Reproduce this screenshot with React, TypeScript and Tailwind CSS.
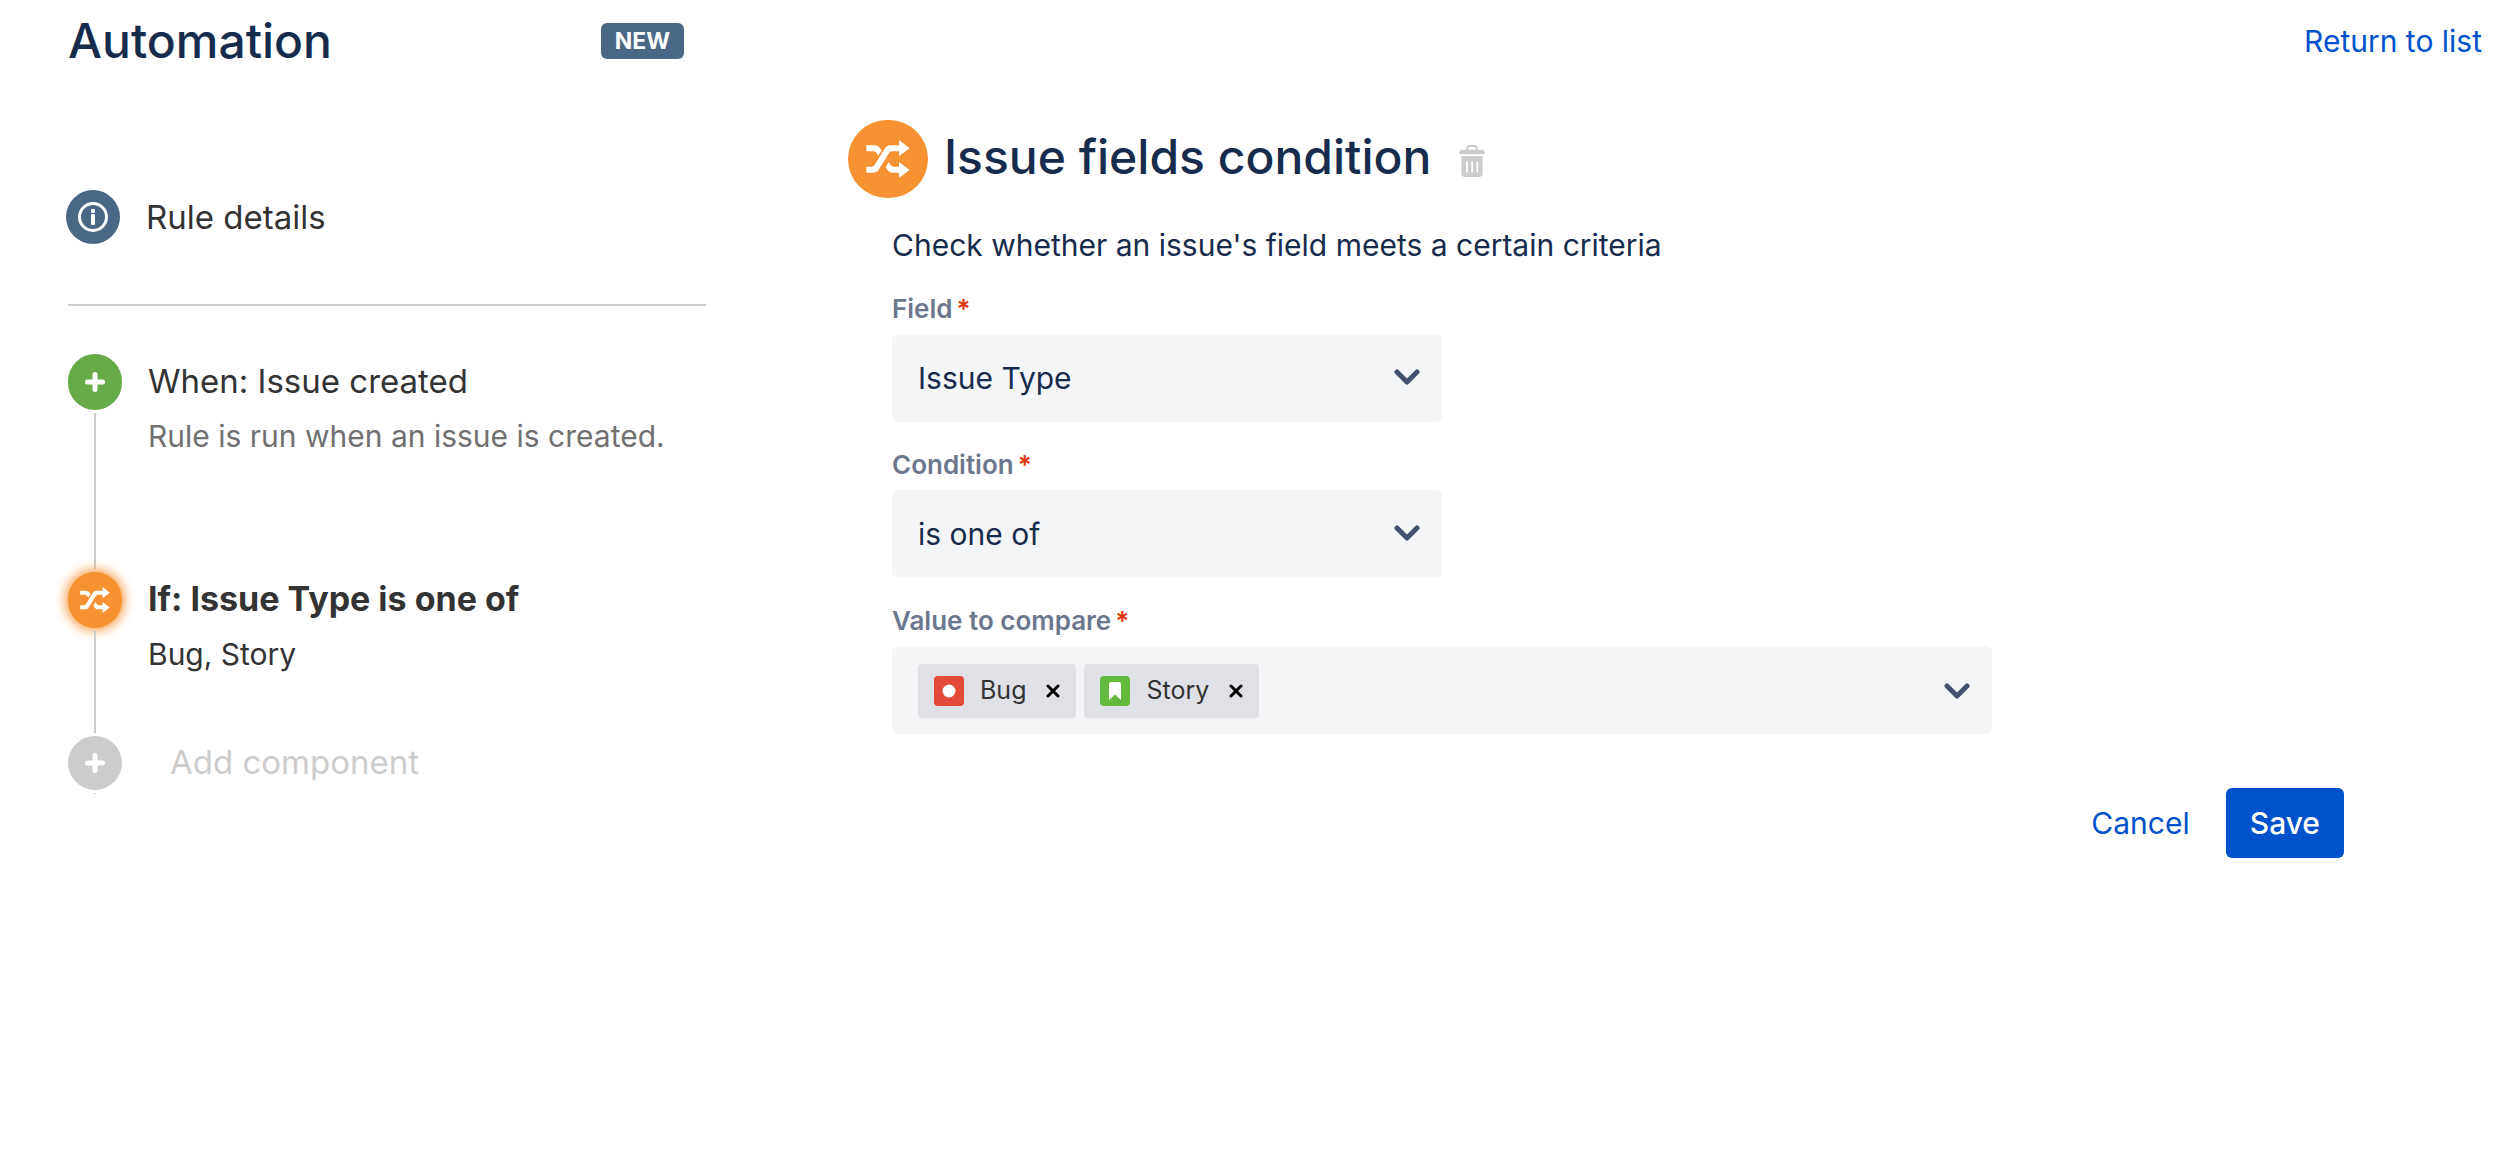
import React, { FC, ReactNode } from "react";

const ShuffleIcon: FC<{ className?: string }> = ({ className }) => (
  <svg viewBox="0 0 130 114" fill="currentColor" className={className} aria-hidden="true">
    <path d="M0 80H17C22 80 24 76 28 70L54 28C59 20 64 16 72 16H98V0L130 25L98 49V34H78C72 34 70 37 66 43L40 85C35 94 30 98 22 98H0Z" />
    <path d="M0 16H24C32 16 38 19 46 31L36 47C29 36 26 34 20 34H0Z" />
    <path d="M67 66L58 82C64 93 70 98 78 98H98V114L130 90L98 66V80H82C76 80 71 74 67 66Z" />
  </svg>
);

const PlusIcon: FC = () => (
  <svg viewBox="0 0 20 20" className="h-5 w-5" aria-hidden="true">
    <path d="M10 2.5V17.5M2.5 10H17.5" stroke="white" strokeWidth="5" strokeLinecap="round" />
  </svg>
);

const InfoIcon: FC = () => (
  <svg viewBox="0 0 30 30" className="h-[30px] w-[30px]" aria-hidden="true">
    <circle cx="15" cy="15" r="13.5" fill="none" stroke="white" strokeWidth="3" />
    <rect x="13" y="7" width="4" height="4" rx="1" fill="white" />
    <rect x="13" y="12" width="4" height="11" rx="1" fill="white" />
  </svg>
);

const TrashIcon: FC = () => (
  <svg viewBox="0 0 74 93" className="h-8 w-[26px]" fill="#ccc" aria-hidden="true">
    <path d="M23 16V10Q23 3 30 3H44Q51 3 51 10V16" fill="none" stroke="#ccc" strokeWidth="6" />
    <path d="M0 27V22Q0 14 8 14H66Q74 14 74 22V27Z" />
    <path
      fillRule="evenodd"
      d="M6 32H68V82Q68 93 57 93H17Q6 93 6 82ZM20 48V80H25V48ZM35 48V80H40V48ZM50 48V80H55V48Z"
    />
  </svg>
);

const ChevronIcon: FC<{ className?: string }> = ({ className }) => (
  <svg viewBox="0 0 26 18" className={"h-[18px] w-[26px] " + (className || "")} aria-hidden="true">
    <path
      d="M3 4L13 14L23 4"
      fill="none"
      stroke="#42526e"
      strokeWidth="5"
      strokeLinecap="round"
      strokeLinejoin="round"
    />
  </svg>
);

const BugIcon: FC = () => (
  <svg viewBox="0 0 30 30" className="h-[30px] w-[30px]" aria-hidden="true">
    <rect width="30" height="30" rx="4" fill="#e5493a" />
    <circle cx="15" cy="15" r="6.5" fill="white" />
  </svg>
);

const StoryIcon: FC = () => (
  <svg viewBox="0 0 30 30" className="h-[30px] w-[30px]" aria-hidden="true">
    <rect width="30" height="30" rx="4" fill="#63ba3c" />
    <path d="M9 8Q9 6 11 6H19Q21 6 21 8V24L15 18.5L9 24Z" fill="white" />
  </svg>
);

interface StepProps {
  icon: ReactNode;
  color: string;
  title: string;
  titleClass: string;
  height?: string;
  last?: boolean;
  children?: ReactNode;
}

const Step: FC<StepProps> = ({ icon, color, title, titleClass, height, last, children }) => (
  <li className={"flex " + (height || "")}>
    <div className="flex w-[54px] shrink-0 flex-col items-center">
      <div className={"flex w-[54px] items-center justify-center rounded-full " + color}>{icon}</div>
      <div className={"my-[3px] w-0.5 bg-[#ccc] " + (last ? "h-px" : "flex-1")} />
    </div>
    <div className="pl-[26px]">
      <h3 className={titleClass}>{title}</h3>
      {children}
    </div>
  </li>
);

const FieldLabel: FC<{ htmlFor: string; children: ReactNode }> = ({ htmlFor, children }) => (
  <label
    htmlFor={htmlFor}
    className="mt-[27px] mb-[9px] flex gap-1 text-[26px] leading-8 font-semibold text-[#6b778c]"
  >
    {children}
    <span className="text-[#de350b]">*</span>
  </label>
);

const SelectField: FC<{ id: string; label: string; value: string }> = ({ id, label, value }) => (
  <div>
    <FieldLabel htmlFor={id}>{label}</FieldLabel>
    <div className="relative w-1/2">
      <select
        id={id}
        defaultValue={value}
        className="h-[88px] w-full appearance-none rounded-md bg-[#f4f5f7] px-[26px] text-[30px] text-[#172b4d]"
      >
        <option>{value}</option>
      </select>
      <ChevronIcon className="pointer-events-none absolute top-[34px] right-[22px]" />
    </div>
  </div>
);

const Tag: FC<{ icon: ReactNode; label: string }> = ({ icon, label }) => (
  <span className="flex h-[54px] items-center rounded bg-[#dfe1e6] px-4 text-[25px] text-[#333]">
    {icon}
    <span className="ml-4">{label}</span>
    <button type="button" aria-label={"Remove " + label} className="ml-5">
      <svg viewBox="0 0 14 14" className="h-3.5 w-3.5" aria-hidden="true">
        <path d="M2 2L12 12M12 2L2 12" stroke="black" strokeWidth="3" strokeLinecap="round" />
      </svg>
    </button>
  </span>
);

const Sidebar: FC = () => (
  <aside className="w-[640px] shrink-0 pt-[110px] text-[#333]">
    <div className="flex items-center">
      <div className="flex h-[54px] w-[54px] items-center justify-center rounded-full bg-[#4a6785]">
        <InfoIcon />
      </div>
      <h2 className="pl-[26px] text-[33px] leading-[54px]">Rule details</h2>
    </div>
    <hr className="mt-[60px] ml-0.5 border-t-2 border-[#ccc]" />
    <ol className="mt-12 ml-0.5">
      <Step
        icon={<PlusIcon />}
        color="h-14 bg-[#67ab49]"
        title="When: Issue created"
        titleClass="text-[33px] leading-[54px]"
        height="min-h-[218px]"
      >
        <p className="text-[30px] leading-[56px] text-[#707070]">Rule is run when an issue is created.</p>
      </Step>
      <Step
        icon={<ShuffleIcon className="h-[26px] w-[30px] text-white" />}
        color="h-14 bg-[#f79232] shadow-[0_0_12px_2px_#f79232]"
        title="If: Issue Type is one of"
        titleClass="text-[34px] leading-[54px] font-bold"
        height="min-h-[164px]"
      >
        <p className="text-[30px] leading-[56px]">Bug, Story</p>
      </Step>
      <Step
        icon={<PlusIcon />}
        color="h-[54px] bg-[#ccc]"
        title="Add component"
        titleClass="pl-[22px] text-[33px] leading-[52px] text-[#ccc]"
        last
      />
    </ol>
  </aside>
);

const ConditionForm: FC = () => (
  <main className="min-w-0 flex-1 pt-10 pr-40 pl-[142px] text-[#172b4d]">
    <div className="flex items-center">
      <div className="flex h-[78px] w-20 items-center justify-center rounded-full bg-[#f79232]">
        <ShuffleIcon className="h-[38px] w-11 text-white" />
      </div>
      <h2 className="ml-4 pb-1 text-[48px] leading-[74px] font-medium">Issue fields condition</h2>
      <button type="button" aria-label="Delete condition" className="ml-7 pt-1">
        <TrashIcon />
      </button>
    </div>
    <form className="pl-11">
      <p className="mt-[26px] text-[30px] leading-[42px]">
        Check whether an issue's field meets a certain criteria
      </p>
      <div className="w-full max-w-[1100px]">
        <SelectField id="field" label="Field" value="Issue Type" />
        <SelectField id="condition" label="Condition" value="is one of" />
        <FieldLabel htmlFor="values">Value to compare</FieldLabel>
        <div className="flex h-[88px] items-center gap-2 rounded-md bg-[#f4f5f7] pt-0.5 pr-[22px] pl-[26px]">
          <Tag icon={<BugIcon />} label="Bug" />
          <Tag icon={<StoryIcon />} label="Story" />
          <input id="values" type="text" className="min-w-0 flex-1 text-[30px] outline-none" />
          <button type="button" aria-label="Show values">
            <ChevronIcon />
          </button>
        </div>
      </div>
      <div className="mt-[54px] flex justify-end text-[30px]">
        <button type="button" className="px-9 text-[#0052cc]">
          Cancel
        </button>
        <button type="button" className="h-[70px] rounded-md bg-[#0052cc] px-6 font-medium text-white">
          Save
        </button>
      </div>
    </form>
  </main>
);

const App: FC = () => {
  return (
    <div className="min-h-screen bg-white font-['Inter','Liberation_Sans',sans-serif]">
      <header className="flex h-20 items-center justify-between pt-0.5 pr-[22px] pl-[68px]">
        <div className="flex w-[616px] items-center justify-between">
          <h1 className="text-[48px] leading-[78px] font-medium text-[#172b4d]">Automation</h1>
          <span className="rounded-md bg-[#4a6785] px-3.5 text-[23px] leading-9 font-bold text-white">
            NEW
          </span>
        </div>
        <a href="#" className="text-[30px] text-[#0052cc]">
          Return to list
        </a>
      </header>
      <div className="flex pl-[66px]">
        <Sidebar />
        <ConditionForm />
      </div>
    </div>
  );
};

export default App;
